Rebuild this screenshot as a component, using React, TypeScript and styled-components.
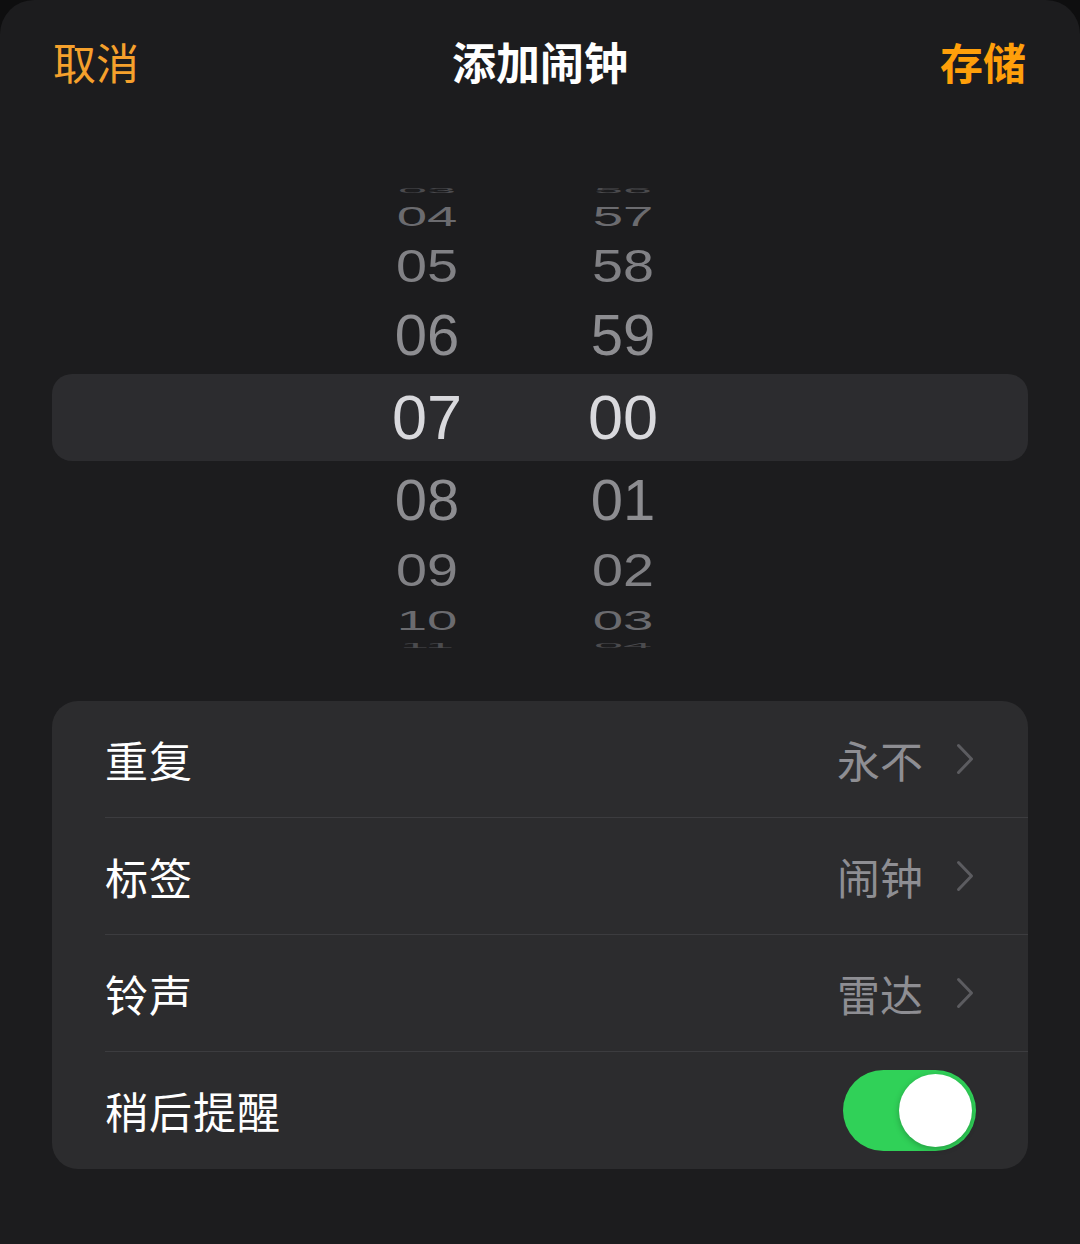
import React, { useState } from 'react';
import styled, { createGlobalStyle } from 'styled-components';

const GlobalStyle = createGlobalStyle`
  html, body {
    margin: 0;
    padding: 0;
    background: #0e0e0f;
  }
  body {
    font-family: 'Noto Sans CJK SC', 'Noto Sans', sans-serif;
    -webkit-font-smoothing: antialiased;
  }
`;

type WheelItem = {
  h: string;
  m: string;
  height: number;
  sy: number;
  sx: number;
  color: string;
  selected?: boolean;
};

const wheel: WheelItem[] = [
  { h: '03', m: '56', height: 14, sy: 0.14, sx: 0.9, color: '#4b4b4e' },
  { h: '04', m: '57', height: 38, sy: 0.48, sx: 0.94, color: '#6b6b6f' },
  { h: '05', m: '58', height: 61, sy: 0.8, sx: 0.96, color: '#818185' },
  { h: '06', m: '59', height: 78, sy: 1, sx: 1, color: '#8d8d91' },
  { h: '07', m: '00', height: 87, sy: 1, sx: 1, color: '#d9d9dd', selected: true },
  { h: '08', m: '01', height: 78, sy: 1, sx: 1, color: '#8d8d91' },
  { h: '09', m: '02', height: 62, sy: 0.8, sx: 0.96, color: '#818185' },
  { h: '10', m: '03', height: 38, sy: 0.48, sx: 0.94, color: '#6b6b6f' },
  { h: '11', m: '04', height: 12, sy: 0.14, sx: 0.9, color: '#4b4b4e' },
];

const rows = [
  { label: '重复', value: '永不' },
  { label: '标签', value: '闹钟' },
  { label: '铃声', value: '雷达' },
];

function Chevron() {
  return (
    <svg width="18" height="32" viewBox="0 0 18 32" fill="none">
      <path d="M2.5 2.5 L15.5 16 L2.5 29.5" stroke="#5c5c60" strokeWidth="3" strokeLinecap="round" strokeLinejoin="round" />
    </svg>
  );
}

export default function App() {
  const [snooze, setSnooze] = useState(true);

  return (
    <>
      <GlobalStyle />
      <Sheet>
        <Header>
          <NavButton>取消</NavButton>
          <Title>添加闹钟</Title>
          <NavButton $bold>存储</NavButton>
        </Header>

        <Picker>
          {wheel.map((item) => (
            <WheelRow key={item.h} $height={item.height} $selected={!!item.selected}>
              <Digit $selected={!!item.selected} $color={item.color} $sx={item.sx} $sy={item.sy}>
                {item.h}
              </Digit>
              <Digit $selected={!!item.selected} $color={item.color} $sx={item.sx} $sy={item.sy}>
                {item.m}
              </Digit>
            </WheelRow>
          ))}
        </Picker>

        <Card>
          {rows.map((r) => (
            <Row key={r.label}>
              <Label>{r.label}</Label>
              <Value>
                <span>{r.value}</span>
                <Chevron />
              </Value>
            </Row>
          ))}
          <Row $last>
            <Label>稍后提醒</Label>
            <Toggle $on={snooze} onClick={() => setSnooze(!snooze)}>
              <Knob $on={snooze} />
            </Toggle>
          </Row>
        </Card>
      </Sheet>
    </>
  );
}

// Styles
const Sheet = styled.div`
  width: 1080px;
  min-height: 1244px;
  background: #1c1c1e;
  border-radius: 34px 34px 0 0;
  display: flex;
  flex-direction: column;
  box-sizing: border-box;
`;

const Header = styled.header`
  height: 122px;
  display: flex;
  align-items: center;
  justify-content: space-between;
  padding: 0 54px 0 53px;
  position: relative;
`;

const NavButton = styled.div<{ $bold?: boolean }>`
  font-size: 43px;
  line-height: 1;
  font-weight: ${(p) => (p.$bold ? 700 : 400)};
  color: ${(p) => (p.$bold ? '#ff9f0a' : '#f5a02c')};
`;

const Title = styled.div`
  position: absolute;
  left: 0;
  right: 0;
  text-align: center;
  font-size: 44px;
  line-height: 1;
  font-weight: 700;
  color: #ffffff;
  pointer-events: none;
`;

const Picker = styled.div`
  padding-top: 61px;
  padding-bottom: 50px;
  display: flex;
  flex-direction: column;
`;

const WheelRow = styled.div<{ $height: number; $selected: boolean }>`
  height: ${(p) => p.$height}px;
  margin: 0 52px;
  padding-left: 325px;
  display: flex;
  align-items: center;
  gap: 96px;
  border-radius: 20px;
  background: ${(p) => (p.$selected ? '#2c2c2f' : 'transparent')};
`;

const Digit = styled.span<{ $selected: boolean; $color: string; $sx: number; $sy: number }>`
  display: block;
  flex: 0 0 100px;
  text-align: center;
  font-family: 'Liberation Sans', Arial, sans-serif;
  font-size: ${(p) => (p.$selected ? 63 : 58)}px;
  line-height: 1;
  color: ${(p) => p.$color};
  transform: scale(${(p) => p.$sx}, ${(p) => p.$sy});
  transform-origin: center;
`;

const Card = styled.div`
  margin: 0 52px;
  background: #2c2c2e;
  border-radius: 26px;
  overflow: hidden;
  display: flex;
  flex-direction: column;
`;

const Row = styled.div<{ $last?: boolean }>`
  height: 117px;
  margin-left: 53px;
  padding-right: 52px;
  display: flex;
  align-items: center;
  justify-content: space-between;
  box-sizing: border-box;
  border-bottom: ${(p) => (p.$last ? 'none' : '1.5px solid #3c3c3f')};
`;

const Label = styled.div`
  font-size: 43px;
  line-height: 1;
  letter-spacing: 1px;
  color: #ffffff;
`;

const Value = styled.div`
  display: flex;
  align-items: center;
  gap: 33px;
  margin-right: 2px;
  font-size: 43px;
  line-height: 1;
  color: #8e8e93;

  svg {
    display: block;
  }
`;

const Toggle = styled.div<{ $on: boolean }>`
  width: 133px;
  height: 81px;
  border-radius: 41px;
  background: ${(p) => (p.$on ? '#30d158' : '#39393d')};
  padding: 4px;
  box-sizing: border-box;
  display: flex;
  justify-content: ${(p) => (p.$on ? 'flex-end' : 'flex-start')};
  cursor: pointer;
`;

const Knob = styled.div<{ $on: boolean }>`
  width: 73px;
  height: 73px;
  border-radius: 50%;
  background: #ffffff;
  box-shadow: 0 2px 6px rgba(0, 0, 0, 0.25);
`;
